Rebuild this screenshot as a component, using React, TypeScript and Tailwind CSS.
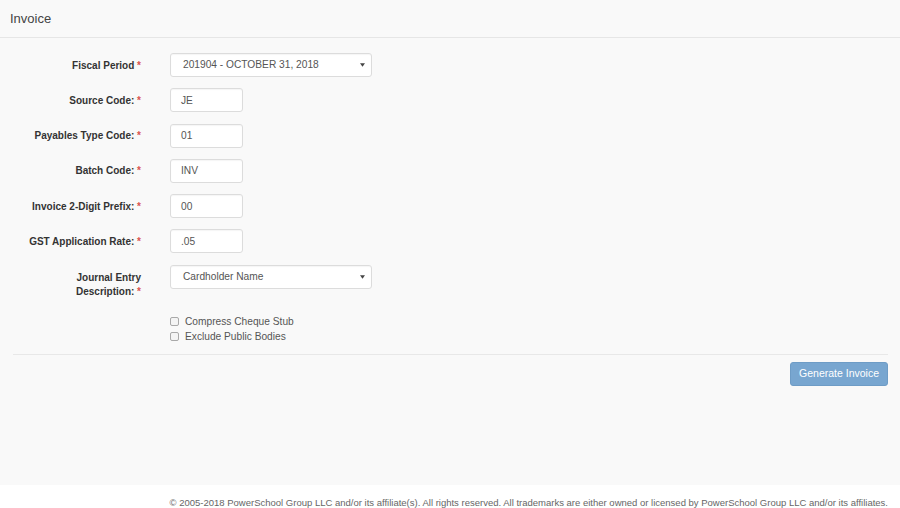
type Field = { label: string; value: string; kind: 'select' | 'text' }

const fields: Field[] = [
  { label: 'Fiscal Period', value: '201904 - OCTOBER 31, 2018', kind: 'select' },
  { label: 'Source Code:', value: 'JE', kind: 'text' },
  { label: 'Payables Type Code:', value: '01', kind: 'text' },
  { label: 'Batch Code:', value: 'INV', kind: 'text' },
  { label: 'Invoice 2-Digit Prefix:', value: '00', kind: 'text' },
  { label: 'GST Application Rate:', value: '.05', kind: 'text' },
]

function Star() {
  return <span className="text-[#d9534f] font-bold"> *</span>
}

function SelectBox({ value }: { value: string }) {
  return (
    <div className="flex items-center justify-between w-[202px] h-[24px] bg-white border border-[#dcdcdc] rounded-[3px] pl-[12px] pr-[5px] text-[10.2px] text-[#555] shadow-[inset_0_1px_1px_rgba(0,0,0,0.04)]">
      <span>{value}</span>
      <svg width="5" height="4" viewBox="0 0 6 4" className="mr-[1px]">
        <path d="M0 0h6L3 4z" fill="#444" />
      </svg>
    </div>
  )
}

function TextBox({ value }: { value: string }) {
  return (
    <div className="flex items-center w-[73px] h-[24px] bg-white border border-[#dcdcdc] rounded-[3px] pl-[10px] text-[10.2px] text-[#555] shadow-[inset_0_1px_1px_rgba(0,0,0,0.04)]">
      {value}
    </div>
  )
}

function Checkbox({ label }: { label: string }) {
  return (
    <label className="flex items-center h-[15px] text-[10.2px] text-[#555]">
      <span className="w-[9px] h-[9px] border border-[#a9a9a9] rounded-[2px] bg-[#f4f4f4]" />
      <span className="ml-[6px]">{label}</span>
    </label>
  )
}

export default function App() {
  return (
    <div className="w-[900px] h-[508px] flex flex-col bg-[#f9f9f9] font-['Liberation_Sans',Arial,sans-serif]">
      <div className="h-[38px] flex items-center pl-[10px] border-b border-[#e6e6e6] text-[13px] text-[#444]">
        Invoice
      </div>

      <div className="flex-1 px-[13px] pt-[15px]">
        <div className="flex flex-col gap-[11.3px]">
          {fields.map((f) => (
            <div key={f.label} className="flex items-center h-[24px]">
              <div className="w-[128px] text-right text-[10px] font-bold text-[#333]">
                {f.label}
                <Star />
              </div>
              <div className="ml-[29px]">
                {f.kind === 'select' ? <SelectBox value={f.value} /> : <TextBox value={f.value} />}
              </div>
            </div>
          ))}

          <div className="flex items-start">
            <div className="w-[128px] text-right text-[10px] font-bold text-[#333] leading-[14px] pt-[6px]">
              Journal Entry
              <br />
              Description:
              <Star />
            </div>
            <div className="ml-[29px]">
              <SelectBox value="Cardholder Name" />
            </div>
          </div>
        </div>

        <div className="ml-[157px] mt-[15px] flex flex-col">
          <Checkbox label="Compress Cheque Stub" />
          <Checkbox label="Exclude Public Bodies" />
        </div>

        <div className="mt-[10px] border-t border-[#e8e8e8] w-[875px]" />

        <div className="flex justify-end w-[875px] mt-[7px]">
          <button className="h-[24px] px-[8px] rounded-[3px] bg-[#78a6d0] border border-[#6e9cc6] text-white text-[10.5px]">
            Generate Invoice
          </button>
        </div>
      </div>

      <div className="h-[23px] bg-white flex items-center justify-end pr-[12px] pt-[13px] text-[9.5px] text-[#666]">
        © 2005-2018 PowerSchool Group LLC and/or its affiliate(s). All rights reserved. All trademarks are either owned or licensed by PowerSchool Group LLC and/or its affiliates.
      </div>
    </div>
  )
}
